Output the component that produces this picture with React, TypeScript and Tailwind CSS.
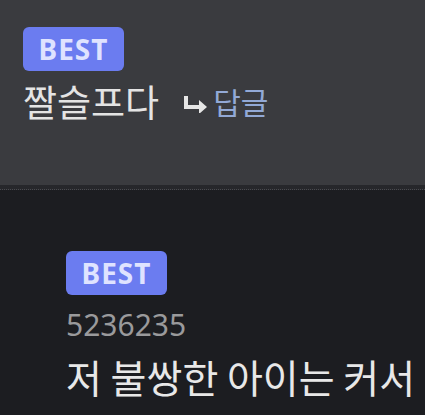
export default function App() {
  return (
    <div className="w-[425px] h-[415px] overflow-hidden bg-[#1c1d21] flex flex-col" style={{ fontFamily: '"Noto Sans", "Noto Sans CJK KR", sans-serif' }}>
      {/* upper comment */}
      <div className="h-[185px] bg-[#3a3b3f] pl-[23px] pt-[27px] flex flex-col">
        <div className="w-[101px] h-[44px] rounded-[6px] bg-[#6b7cf0] flex items-center justify-center text-[28px] font-bold tracking-[1px] text-[#dfe3ff]">
          BEST
        </div>
        <div className="flex items-center mt-[8px] h-[44px]">
          <span className="text-[37px] leading-none text-[#e4e4e4]" style={{ fontFamily: '"Noto Sans CJK KR", sans-serif' }}>
            짤슬프다
          </span>
          <svg className="ml-[24px] mt-[6px]" width="26" height="18" viewBox="0 0 26 18">
            <path d="M3 1 V12 H17" fill="none" stroke="#e6e6e6" strokeWidth="4" />
            <path d="M16 5 L24 12 L16 19 Z" fill="#e6e6e6" />
          </svg>
          <span className="ml-[4px] text-[30px] leading-none text-[#92a9d6]" style={{ fontFamily: '"Noto Sans CJK KR", sans-serif' }}>
            답글
          </span>
        </div>
      </div>

      {/* divider */}
      <div className="h-[5px] bg-[#26272b] border-b border-dotted border-[#4a4b50]" />

      {/* lower comment */}
      <div className="pl-[66px] pt-[61px] flex flex-col">
        <div className="w-[101px] h-[44px] rounded-[6px] bg-[#6b7cf0] flex items-center justify-center text-[28px] font-bold tracking-[1px] text-[#dfe3ff]">
          BEST
        </div>
        <div className="mt-[12px] text-[30px] leading-[36px] text-[#9a9a9c]">5236235</div>
        <div className="mt-[10px] text-[39px] leading-[46px] text-[#e8e8e8] whitespace-nowrap" style={{ fontFamily: '"Noto Sans CJK KR", sans-serif' }}>
          저 불쌍한 아이는 커서
        </div>
      </div>
    </div>
  )
}
